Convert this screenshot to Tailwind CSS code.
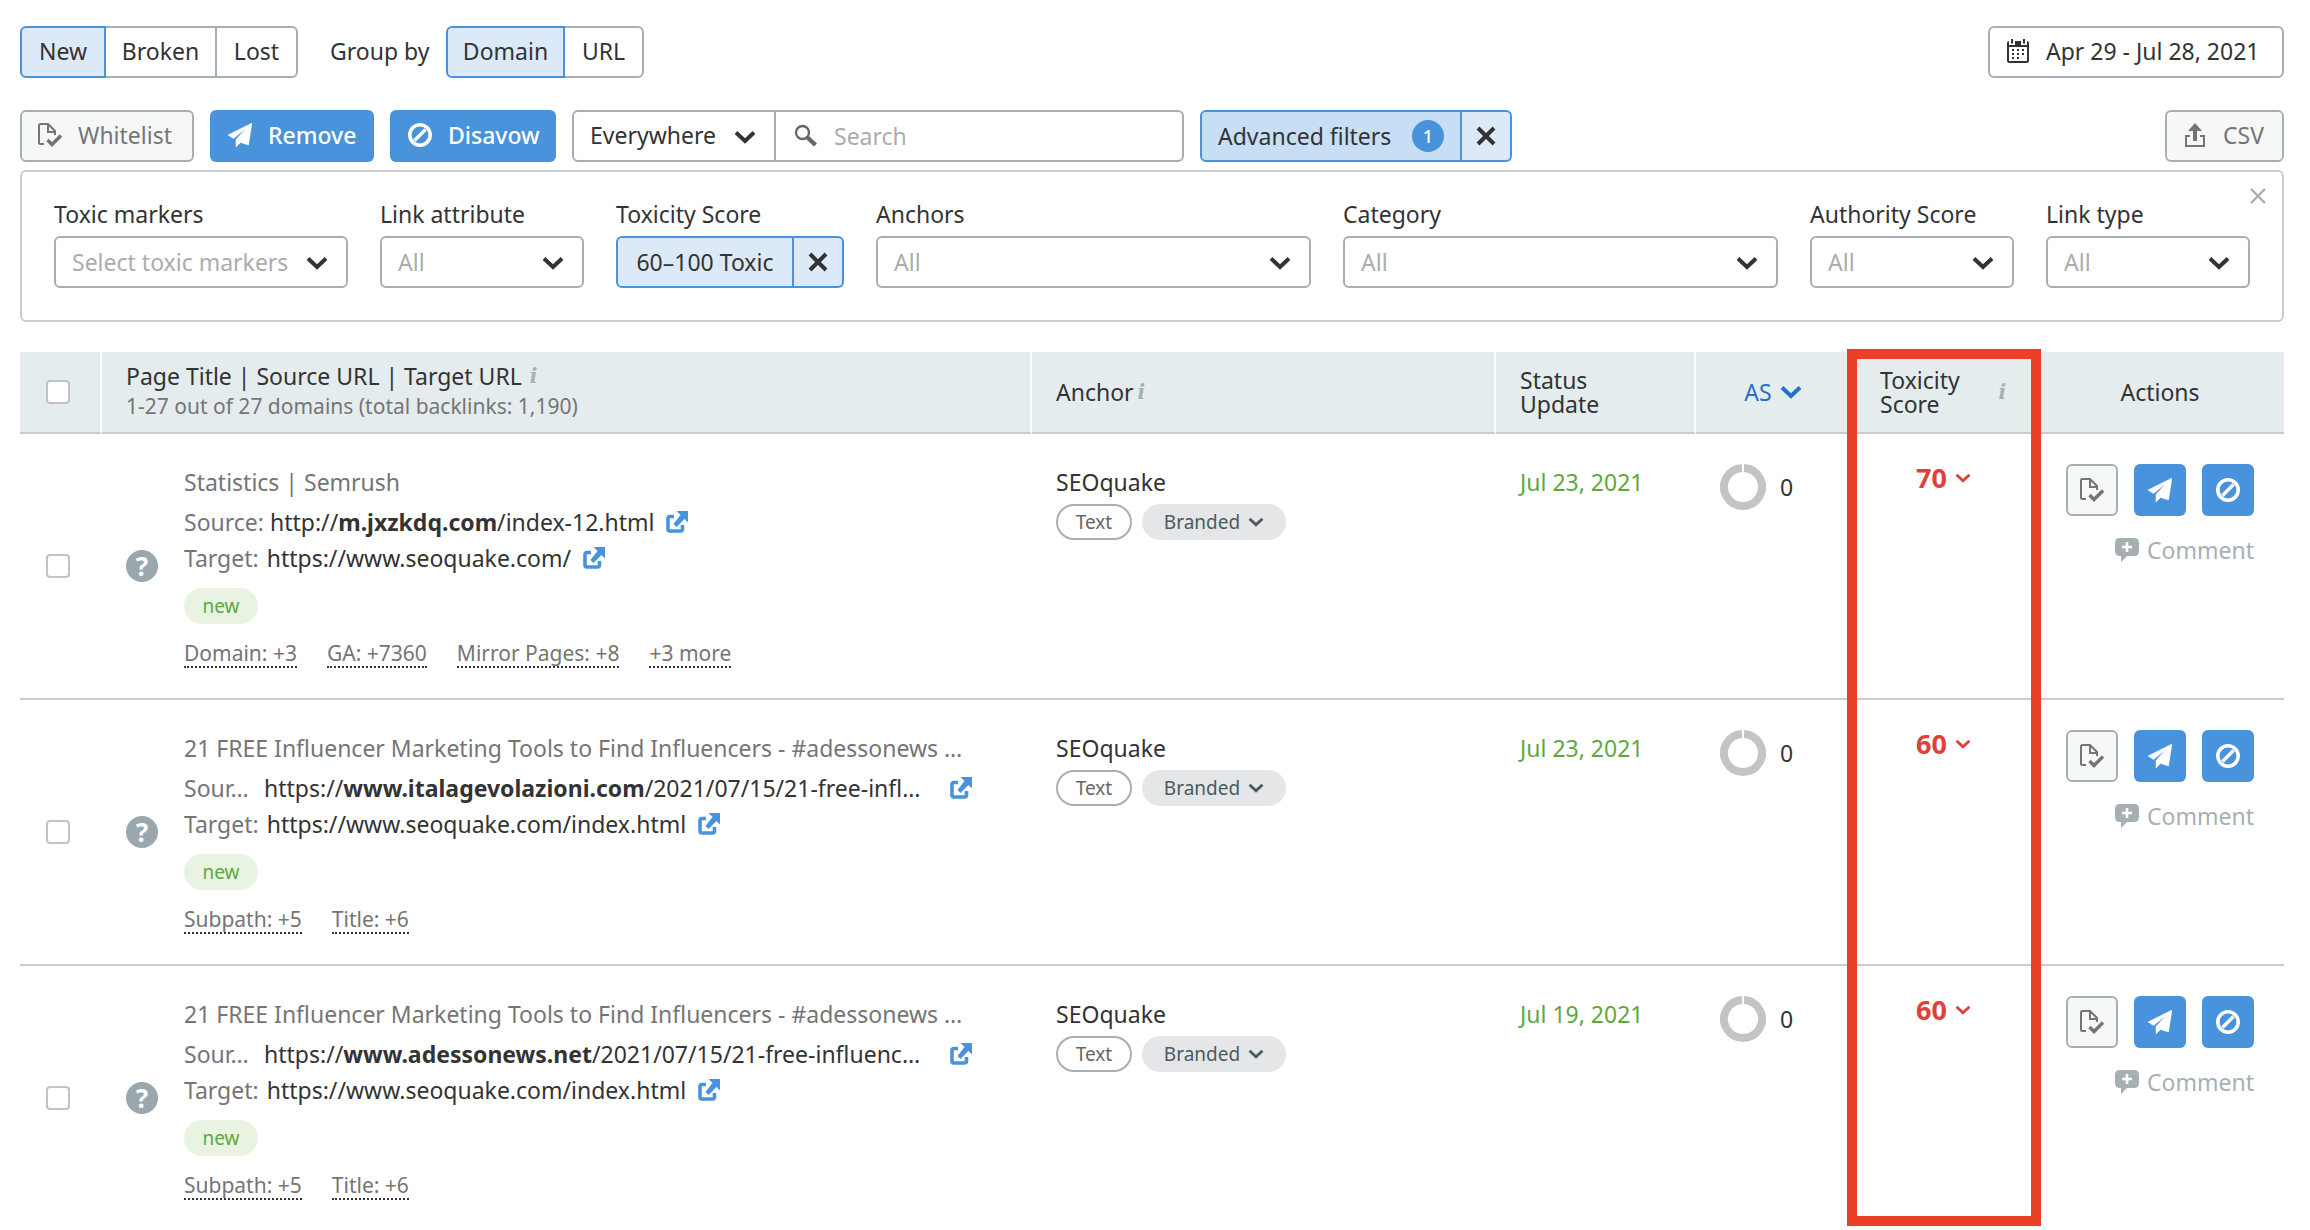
<!DOCTYPE html>
<html lang="en">
<head>
    <meta charset="UTF-8">
    <meta name="viewport" content="width=device-width, initial-scale=1.0">
    <title>Backlink Audit</title>

    <!-- Tailwind CSS -->
    <script src="https://cdn.jsdelivr.net/npm/@tailwindcss/browser@4"></script>
</head>
<body class="bg-white pt-[26px] pr-[26px] pl-5 font-['Noto_Sans','Open_Sans',sans-serif] text-[23px] leading-9 text-[#333] overflow-x-hidden">

    <!-- Icon set -->
    <svg class="hidden" xmlns="http://www.w3.org/2000/svg">
        <symbol id="i-doc" viewBox="0 0 24 24">
            <path d="M6 21H2.500Q1 21 1 19.500V2.500Q1 1 2.500 1H10L17 8V12M10 1V9H17" fill="none" stroke="currentColor" stroke-width="2"/>
            <path d="M9.500 17L14 21.500L23 12.500" fill="none" stroke="currentColor" stroke-width="3.400"/>
        </symbol>
        <symbol id="i-plane" viewBox="0 0 24 24">
            <path d="M24 0L0 12L5.500 15.500L18 5.500L8 16.500V24L12.500 19.500L20.500 22Z" fill="currentColor" stroke="currentColor" stroke-width="0.500" stroke-linejoin="round"/>
        </symbol>
        <symbol id="i-ban" viewBox="0 0 24 24">
            <circle cx="12" cy="12" r="10.200" fill="none" stroke="currentColor" stroke-width="3.600"/>
            <path d="M6.500 17.500L17.500 6.500" stroke="currentColor" stroke-width="3.400"/>
        </symbol>
        <symbol id="i-down" viewBox="0 0 22 14">
            <path d="M2 2.500L11 11L20 2.500" fill="none" stroke="currentColor" stroke-width="4"/>
        </symbol>
        <symbol id="i-x" viewBox="0 0 20 20">
            <path d="M2 2L18 18M18 2L2 18" stroke="currentColor" stroke-width="4"/>
        </symbol>
        <symbol id="i-close" viewBox="0 0 16 16">
            <path d="M1 1L15 15M15 1L1 15" stroke="currentColor" stroke-width="2.400"/>
        </symbol>
        <symbol id="i-search" viewBox="0 0 24 24">
            <circle cx="8.500" cy="8.500" r="6.500" fill="none" stroke="currentColor" stroke-width="2.400"/>
            <path d="M13.500 13.500L21.500 21" stroke="currentColor" stroke-width="4.400"/>
        </symbol>
        <symbol id="i-cal" viewBox="0 0 24 24">
            <path d="M2 5V21.500Q2 23 3.500 23H20.500Q22 23 22 21.500V5" fill="none" stroke="currentColor" stroke-width="2"/>
            <path d="M1 4Q1 2 3 2V6H21V2Q23 2 23 4V8H1ZM9 2H15V6H9Z" fill="currentColor"/>
            <path d="M6 0V4.500M18 0V4.500" stroke="currentColor" stroke-width="2"/>
            <path d="M6 11H8M11 11H13M16 11H18M6 15H8M11 15H13M16 15H18M6 19H8M11 19H13" stroke="currentColor" stroke-width="2"/>
        </symbol>
        <symbol id="i-export" viewBox="0 0 24 24">
            <path d="M7 13H3V23H21V13H17" fill="none" stroke="currentColor" stroke-width="2"/>
            <path d="M12 18V6" stroke="currentColor" stroke-width="4"/>
            <path d="M12 0L19 8H5Z" fill="currentColor"/>
        </symbol>
        <symbol id="i-ext" viewBox="0 0 22 22">
            <path d="M8 5.500H4Q2 5.500 2 7.500V18Q2 20 4 20H14.500Q16.500 20 16.500 18V14" fill="none" stroke="currentColor" stroke-width="3.600"/>
            <path d="M10.500 0H22V11.500L18.500 8L10.500 16L7.500 13L14.500 4Z" fill="currentColor"/>
        </symbol>
        <symbol id="i-comment" viewBox="0 0 24 24">
            <path d="M5 0H19Q24 0 24 5V13Q24 18 19 18H12L6 24V18H5Q0 18 0 13V5Q0 0 5 0Z" fill="currentColor"/>
            <path d="M12 4V14M7 9H17" stroke="#fff" stroke-width="2.600"/>
        </symbol>
        <symbol id="i-ring" viewBox="0 0 46 46">
            <path d="M24 4A19 19 0 1 1 22 4" fill="none" stroke="#c4c4c4" stroke-width="8"/>
        </symbol>
    </svg>

    <!-- Top bar -->
    <header class="flex items-center">
        <div class="flex h-[52px]">
            <button class="w-[86px] rounded-l-md border-2 border-[#4893dc] bg-[#dce9f8] pb-[2px]">New</button>
            <button class="w-[111px] border-y-2 border-r-2 border-[#a6b0b3] pb-[2px]">Broken</button>
            <button class="w-[81px] rounded-r-md border-y-2 border-r-2 border-[#a6b0b3] pb-[2px]">Lost</button>
        </div>
        <span class="ml-8 w-[116px] pb-[2px]">Group by</span>
        <div class="flex h-[52px]">
            <button class="w-[119px] rounded-l-md border-2 border-[#4893dc] bg-[#dce9f8] pb-[2px]">Domain</button>
            <button class="w-[79px] rounded-r-md border-y-2 border-r-2 border-[#a6b0b3] pb-[2px]">URL</button>
        </div>
        <button class="ml-auto flex h-[52px] w-[296px] items-center gap-4 rounded-md border-2 border-[#a6b0b3] px-4 pb-[2px] whitespace-nowrap">
            <svg class="size-6 shrink-0"><use href="#i-cal"/></svg>Apr 29 - Jul 28, 2021
        </button>
    </header>

    <!-- Bulk actions and search -->
    <div class="mt-8 flex items-center gap-4">
        <button class="flex h-[52px] w-[174px] items-center gap-4 rounded-md border-2 border-[#a6b0b3] bg-[#f5f8f7] px-4 pb-[2px] text-[#757575]">
            <svg class="size-6 shrink-0"><use href="#i-doc"/></svg>Whitelist
        </button>
        <button class="flex h-[52px] w-[164px] items-center gap-4 rounded-md bg-[#4893dc] px-[18px] pb-[2px] font-medium text-white">
            <svg class="size-6 shrink-0"><use href="#i-plane"/></svg>Remove
        </button>
        <button class="flex h-[52px] w-[166px] items-center gap-4 rounded-md bg-[#4893dc] px-[18px] pb-[2px] font-medium text-white">
            <svg class="size-6 shrink-0"><use href="#i-ban"/></svg>Disavow
        </button>
        <div class="flex h-[52px]">
            <div class="relative">
                <select aria-label="Search scope" class="h-full w-[204px] appearance-none rounded-l-md border-2 border-[#a6b0b3] px-4 pb-[2px]">
                    <option>Everywhere</option>
                </select>
                <svg class="pointer-events-none absolute top-5 right-5 h-[14px] w-[22px]"><use href="#i-down"/></svg>
            </div>
            <label class="flex w-[408px] items-center gap-4 rounded-r-md border-y-2 border-r-2 border-[#a6b0b3] px-[18px]">
                <svg class="size-6 shrink-0 text-[#666]"><use href="#i-search"/></svg>
                <input type="text" aria-label="Search" placeholder="Search" class="w-full outline-none placeholder:text-[#acacac]">
            </label>
        </div>
        <div class="flex h-[52px]">
            <button class="flex w-[262px] items-center justify-between rounded-l-md border-2 border-[#4893dc] bg-[#c8def5] px-4 whitespace-nowrap">
                Advanced filters
                <span class="flex size-8 shrink-0 items-center justify-center rounded-full bg-[#4893dc] text-lg font-medium text-white">1</span>
            </button>
            <button aria-label="Clear filters" class="flex w-[50px] items-center justify-center rounded-r-md border-y-2 border-r-2 border-[#4893dc] bg-[#dce9f8]">
                <svg class="size-5"><use href="#i-x"/></svg>
            </button>
        </div>
        <button class="ml-auto flex h-[52px] w-[119px] items-center gap-4 rounded-md border-2 border-[#a6b0b3] bg-[#f5f8f7] px-4 pb-[2px] text-[#757575]">
            <svg class="size-6 shrink-0"><use href="#i-export"/></svg>CSV
        </button>
    </div>

    <!-- Advanced filters -->
    <section class="relative mt-2 flex h-[152px] gap-8 rounded-md border-2 border-[#ccc] px-8 pt-6">
        <div class="w-[294px]">
            <label for="markers" class="block">Toxic markers</label>
            <div class="relative mt-1">
                <select id="markers" class="h-[52px] w-full appearance-none rounded-md border-2 border-[#a6b0b3] px-4 text-[#acacac]"><option>Select toxic markers</option></select>
                <svg class="pointer-events-none absolute top-5 right-5 h-[14px] w-[22px]"><use href="#i-down"/></svg>
            </div>
        </div>
        <div class="w-[204px]">
            <label for="attribute" class="block">Link attribute</label>
            <div class="relative mt-1">
                <select id="attribute" class="h-[52px] w-full appearance-none rounded-md border-2 border-[#a6b0b3] px-4 text-[#acacac]"><option>All</option></select>
                <svg class="pointer-events-none absolute top-5 right-5 h-[14px] w-[22px]"><use href="#i-down"/></svg>
            </div>
        </div>
        <div class="w-[228px]">
            <label for="toxicity" class="block">Toxicity Score</label>
            <div class="mt-1 flex h-[52px]">
                <button id="toxicity" class="w-[178px] rounded-l-md border-2 border-[#4893dc] bg-[#dce9f8] whitespace-nowrap">60–100 Toxic</button>
                <button aria-label="Clear toxicity score" class="flex w-[50px] items-center justify-center rounded-r-md border-y-2 border-r-2 border-[#4893dc] bg-[#dce9f8]">
                    <svg class="size-5"><use href="#i-x"/></svg>
                </button>
            </div>
        </div>
        <div class="flex-1">
            <label for="anchors" class="block">Anchors</label>
            <div class="relative mt-1">
                <select id="anchors" class="h-[52px] w-full appearance-none rounded-md border-2 border-[#a6b0b3] px-4 text-[#acacac]"><option>All</option></select>
                <svg class="pointer-events-none absolute top-5 right-5 h-[14px] w-[22px]"><use href="#i-down"/></svg>
            </div>
        </div>
        <div class="flex-1">
            <label for="category" class="block">Category</label>
            <div class="relative mt-1">
                <select id="category" class="h-[52px] w-full appearance-none rounded-md border-2 border-[#a6b0b3] px-4 text-[#acacac]"><option>All</option></select>
                <svg class="pointer-events-none absolute top-5 right-5 h-[14px] w-[22px]"><use href="#i-down"/></svg>
            </div>
        </div>
        <div class="w-[204px]">
            <label for="authority" class="block">Authority Score</label>
            <div class="relative mt-1">
                <select id="authority" class="h-[52px] w-full appearance-none rounded-md border-2 border-[#a6b0b3] px-4 text-[#acacac]"><option>All</option></select>
                <svg class="pointer-events-none absolute top-5 right-5 h-[14px] w-[22px]"><use href="#i-down"/></svg>
            </div>
        </div>
        <div class="w-[204px]">
            <label for="linktype" class="block">Link type</label>
            <div class="relative mt-1">
                <select id="linktype" class="h-[52px] w-full appearance-none rounded-md border-2 border-[#a6b0b3] px-4 text-[#acacac]"><option>All</option></select>
                <svg class="pointer-events-none absolute top-5 right-5 h-[14px] w-[22px]"><use href="#i-down"/></svg>
            </div>
        </div>
        <button aria-label="Close filters" class="absolute top-4 right-4 text-[#a6b0b3]"><svg class="block size-4"><use href="#i-close"/></svg></button>
    </section>

    <!-- Backlinks table -->
    <main class="relative mt-[30px]">
        <table class="w-full table-fixed border-separate border-spacing-0 text-left">
            <colgroup>
                <col class="w-[82px]"><col><col class="w-[464px]"><col class="w-[200px]"><col class="w-[160px]"><col class="w-[180px]"><col class="w-[248px]">
            </colgroup>
            <thead>
                <tr class="h-[82px] bg-[#e4ecee]">
                    <th class="border-r-2 border-b-2 border-r-white border-b-[#ccc] px-[26px]">
                        <input type="checkbox" aria-label="Select all" class="block size-6 appearance-none rounded-sm border-2 border-[#c0c4c6] bg-white">
                    </th>
                    <th class="border-r-2 border-b-2 border-r-white border-b-[#ccc] px-6 pb-1 font-normal">
                        <div class="flex items-center gap-2 leading-8">Page Title | Source URL | Target URL
                            <span class="font-['DejaVu_Serif',serif] text-xl leading-6 font-bold text-[#a6b0b3] italic">i</span>
                        </div>
                        <div class="text-[21px] leading-7 text-[#757575]">1-27 out of 27 domains (total backlinks: 1,190)</div>
                    </th>
                    <th class="border-r-2 border-b-2 border-r-white border-b-[#ccc] px-6 font-normal">
                        <div class="flex items-center gap-1">Anchor <span class="font-['DejaVu_Serif',serif] text-xl leading-6 font-bold text-[#a6b0b3] italic">i</span></div>
                    </th>
                    <th class="border-r-2 border-b-2 border-r-white border-b-[#ccc] px-6 leading-6 font-normal">Status<br>Update</th>
                    <th class="border-r-2 border-b-2 border-r-white border-b-[#ccc] font-normal text-[#2571c2]">
                        <button class="mx-auto flex items-center gap-2 pr-1">AS <svg class="h-[14px] w-[22px]"><use href="#i-down"/></svg></button>
                    </th>
                    <th class="border-r-2 border-b-2 border-r-white border-b-[#ccc] pr-7 pl-6 leading-6 font-normal">
                        <div class="flex items-center justify-between"><span>Toxicity<br>Score</span><span class="font-['DejaVu_Serif',serif] text-xl leading-6 font-bold text-[#a6b0b3] italic">i</span></div>
                    </th>
                    <th class="border-b-2 border-[#ccc] text-center font-normal">Actions</th>
                </tr>
            </thead>
            <tbody>
                <tr class="align-top">
                    <td class="border-b-2 border-[#ccc] px-[26px] align-middle">
                        <input type="checkbox" aria-label="Select row" class="block size-6 appearance-none rounded-sm border-2 border-[#c0c4c6] bg-white">
                    </td>
                    <td class="border-b-2 border-[#ccc] pt-[30px] pb-[30px] pl-6">
                        <div class="flex items-center gap-[26px] whitespace-nowrap">
                            <span class="flex size-8 shrink-0 items-center justify-center rounded-full bg-[#9aa7ad] text-[26px] font-bold text-white">?</span>
                            <div>
                                <div class="mb-1 text-[#757575]">Statistics | Semrush</div>
                                <div class="flex items-center"><span class="mr-[6px] text-[#757575]">Source:</span><a href="#">http://<b>m.jxzkdq.com</b>/index-12.html</a><svg class="ml-3 size-[22px] text-[#4893dc]"><use href="#i-ext"/></svg></div>
                                <div class="flex items-center"><span class="mr-2 text-[#757575]">Target:</span><a href="#">https://www.seoquake.com/</a><svg class="ml-3 size-[22px] text-[#4893dc]"><use href="#i-ext"/></svg></div>
                                <div class="mt-3 flex h-9 w-[74px] items-center justify-center rounded-full bg-[#e8f3e2] text-[19px] text-[#5fa83e]">new</div>
                                <div class="mt-4 flex gap-[30px] text-[21px] leading-[26px] text-[#757575]">
                                    <a href="#" class="border-b-2 border-dotted border-[#333]">Domain: +3</a>
                                    <a href="#" class="border-b-2 border-dotted border-[#333]">GA: +7360</a>
                                    <a href="#" class="border-b-2 border-dotted border-[#333]">Mirror Pages: +8</a>
                                    <a href="#" class="border-b-2 border-dotted border-[#333]">+3 more</a>
                                </div>
                            </div>
                        </div>
                    </td>
                    <td class="border-b-2 border-[#ccc] pt-[30px] pl-6">
                        <div>SEOquake</div>
                        <div class="mt-1 flex gap-[10px] text-[19px]">
                            <span class="flex h-9 w-[76px] items-center justify-center rounded-full border-2 border-[#a6b0b3] text-[#666]">Text</span>
                            <button class="flex h-9 w-[144px] items-center justify-center gap-2 rounded-full bg-[#e5e6e8] text-[#4a5a60]">Branded <svg class="h-[10px] w-4"><use href="#i-down"/></svg></button>
                        </div>
                    </td>
                    <td class="border-b-2 border-[#ccc] pt-[30px] pl-6 text-[#5fa83e]">Jul 23, 2021</td>
                    <td class="border-b-2 border-[#ccc] pt-[30px] pl-6">
                        <div class="flex items-center gap-[14px]"><svg class="size-[46px]"><use href="#i-ring"/></svg>0</div>
                    </td>
                    <td class="border-b-2 border-[#ccc] pt-[26px] pl-[60px] text-[#e0403a]">
                        <button class="flex items-center gap-2 text-[27px] font-bold">70 <svg class="h-[10px] w-4"><use href="#i-down"/></svg></button>
                    </td>
                    <td class="border-b-2 border-[#ccc] pt-[30px] pr-[30px]">
                        <div class="flex justify-end gap-4">
                            <button aria-label="Whitelist" class="flex size-[52px] items-center justify-center rounded-md border-2 border-[#a6b0b3] bg-[#f5f8f7] text-[#757575]"><svg class="size-6"><use href="#i-doc"/></svg></button>
                            <button aria-label="Remove" class="flex size-[52px] items-center justify-center rounded-md bg-[#4893dc] text-white"><svg class="size-6"><use href="#i-plane"/></svg></button>
                            <button aria-label="Disavow" class="flex size-[52px] items-center justify-center rounded-md bg-[#4893dc] text-white"><svg class="size-6"><use href="#i-ban"/></svg></button>
                        </div>
                        <button class="mt-4 ml-auto flex items-center gap-2 text-[#a6b0b3]"><svg class="size-6"><use href="#i-comment"/></svg>Comment</button>
                    </td>
                </tr>
                <tr class="align-top">
                    <td class="border-b-2 border-[#ccc] px-[26px] align-middle">
                        <input type="checkbox" aria-label="Select row" class="block size-6 appearance-none rounded-sm border-2 border-[#c0c4c6] bg-white">
                    </td>
                    <td class="border-b-2 border-[#ccc] pt-[30px] pb-[30px] pl-6">
                        <div class="flex items-center gap-[26px] whitespace-nowrap">
                            <span class="flex size-8 shrink-0 items-center justify-center rounded-full bg-[#9aa7ad] text-[26px] font-bold text-white">?</span>
                            <div>
                                <div class="mb-1 text-[#757575]">21 FREE Influencer Marketing Tools to Find Influencers - #adessonews …</div>
                                <div class="flex items-center"><span class="w-20 text-[#757575]">Sour…</span><a href="#" class="w-[674px]">https://<b>www.italagevolazioni.com</b>/2021/07/15/21-free-infl…</a><svg class="ml-3 size-[22px] text-[#4893dc]"><use href="#i-ext"/></svg></div>
                                <div class="flex items-center"><span class="mr-2 text-[#757575]">Target:</span><a href="#">https://www.seoquake.com/index.html</a><svg class="ml-3 size-[22px] text-[#4893dc]"><use href="#i-ext"/></svg></div>
                                <div class="mt-3 flex h-9 w-[74px] items-center justify-center rounded-full bg-[#e8f3e2] text-[19px] text-[#5fa83e]">new</div>
                                <div class="mt-4 flex gap-[30px] text-[21px] leading-[26px] text-[#757575]">
                                    <a href="#" class="border-b-2 border-dotted border-[#333]">Subpath: +5</a>
                                    <a href="#" class="border-b-2 border-dotted border-[#333]">Title: +6</a>
                                </div>
                            </div>
                        </div>
                    </td>
                    <td class="border-b-2 border-[#ccc] pt-[30px] pl-6">
                        <div>SEOquake</div>
                        <div class="mt-1 flex gap-[10px] text-[19px]">
                            <span class="flex h-9 w-[76px] items-center justify-center rounded-full border-2 border-[#a6b0b3] text-[#666]">Text</span>
                            <button class="flex h-9 w-[144px] items-center justify-center gap-2 rounded-full bg-[#e5e6e8] text-[#4a5a60]">Branded <svg class="h-[10px] w-4"><use href="#i-down"/></svg></button>
                        </div>
                    </td>
                    <td class="border-b-2 border-[#ccc] pt-[30px] pl-6 text-[#5fa83e]">Jul 23, 2021</td>
                    <td class="border-b-2 border-[#ccc] pt-[30px] pl-6">
                        <div class="flex items-center gap-[14px]"><svg class="size-[46px]"><use href="#i-ring"/></svg>0</div>
                    </td>
                    <td class="border-b-2 border-[#ccc] pt-[26px] pl-[60px] text-[#e0403a]">
                        <button class="flex items-center gap-2 text-[27px] font-bold">60 <svg class="h-[10px] w-4"><use href="#i-down"/></svg></button>
                    </td>
                    <td class="border-b-2 border-[#ccc] pt-[30px] pr-[30px]">
                        <div class="flex justify-end gap-4">
                            <button aria-label="Whitelist" class="flex size-[52px] items-center justify-center rounded-md border-2 border-[#a6b0b3] bg-[#f5f8f7] text-[#757575]"><svg class="size-6"><use href="#i-doc"/></svg></button>
                            <button aria-label="Remove" class="flex size-[52px] items-center justify-center rounded-md bg-[#4893dc] text-white"><svg class="size-6"><use href="#i-plane"/></svg></button>
                            <button aria-label="Disavow" class="flex size-[52px] items-center justify-center rounded-md bg-[#4893dc] text-white"><svg class="size-6"><use href="#i-ban"/></svg></button>
                        </div>
                        <button class="mt-4 ml-auto flex items-center gap-2 text-[#a6b0b3]"><svg class="size-6"><use href="#i-comment"/></svg>Comment</button>
                    </td>
                </tr>
                <tr class="align-top">
                    <td class="px-[26px] align-middle">
                        <input type="checkbox" aria-label="Select row" class="block size-6 appearance-none rounded-sm border-2 border-[#c0c4c6] bg-white">
                    </td>
                    <td class="pt-[30px] pb-[30px] pl-6">
                        <div class="flex items-center gap-[26px] whitespace-nowrap">
                            <span class="flex size-8 shrink-0 items-center justify-center rounded-full bg-[#9aa7ad] text-[26px] font-bold text-white">?</span>
                            <div>
                                <div class="mb-1 text-[#757575]">21 FREE Influencer Marketing Tools to Find Influencers - #adessonews …</div>
                                <div class="flex items-center"><span class="w-20 text-[#757575]">Sour…</span><a href="#" class="w-[674px]">https://<b>www.adessonews.net</b>/2021/07/15/21-free-influenc…</a><svg class="ml-3 size-[22px] text-[#4893dc]"><use href="#i-ext"/></svg></div>
                                <div class="flex items-center"><span class="mr-2 text-[#757575]">Target:</span><a href="#">https://www.seoquake.com/index.html</a><svg class="ml-3 size-[22px] text-[#4893dc]"><use href="#i-ext"/></svg></div>
                                <div class="mt-3 flex h-9 w-[74px] items-center justify-center rounded-full bg-[#e8f3e2] text-[19px] text-[#5fa83e]">new</div>
                                <div class="mt-4 flex gap-[30px] text-[21px] leading-[26px] text-[#757575]">
                                    <a href="#" class="border-b-2 border-dotted border-[#333]">Subpath: +5</a>
                                    <a href="#" class="border-b-2 border-dotted border-[#333]">Title: +6</a>
                                </div>
                            </div>
                        </div>
                    </td>
                    <td class="pt-[30px] pl-6">
                        <div>SEOquake</div>
                        <div class="mt-1 flex gap-[10px] text-[19px]">
                            <span class="flex h-9 w-[76px] items-center justify-center rounded-full border-2 border-[#a6b0b3] text-[#666]">Text</span>
                            <button class="flex h-9 w-[144px] items-center justify-center gap-2 rounded-full bg-[#e5e6e8] text-[#4a5a60]">Branded <svg class="h-[10px] w-4"><use href="#i-down"/></svg></button>
                        </div>
                    </td>
                    <td class="pt-[30px] pl-6 text-[#5fa83e]">Jul 19, 2021</td>
                    <td class="pt-[30px] pl-6">
                        <div class="flex items-center gap-[14px]"><svg class="size-[46px]"><use href="#i-ring"/></svg>0</div>
                    </td>
                    <td class="pt-[26px] pl-[60px] text-[#e0403a]">
                        <button class="flex items-center gap-2 text-[27px] font-bold">60 <svg class="h-[10px] w-4"><use href="#i-down"/></svg></button>
                    </td>
                    <td class="pt-[30px] pr-[30px]">
                        <div class="flex justify-end gap-4">
                            <button aria-label="Whitelist" class="flex size-[52px] items-center justify-center rounded-md border-2 border-[#a6b0b3] bg-[#f5f8f7] text-[#757575]"><svg class="size-6"><use href="#i-doc"/></svg></button>
                            <button aria-label="Remove" class="flex size-[52px] items-center justify-center rounded-md bg-[#4893dc] text-white"><svg class="size-6"><use href="#i-plane"/></svg></button>
                            <button aria-label="Disavow" class="flex size-[52px] items-center justify-center rounded-md bg-[#4893dc] text-white"><svg class="size-6"><use href="#i-ban"/></svg></button>
                        </div>
                        <button class="mt-4 ml-auto flex items-center gap-2 text-[#a6b0b3]"><svg class="size-6"><use href="#i-comment"/></svg>Comment</button>
                    </td>
                </tr>
            </tbody>
        </table>

        <!-- Highlight around the toxicity column -->
        <div class="pointer-events-none absolute -top-[3px] right-[243px] bottom-1 w-[194px] border-[10px] border-[#eb4025]"></div>
    </main>
</body>
</html>
